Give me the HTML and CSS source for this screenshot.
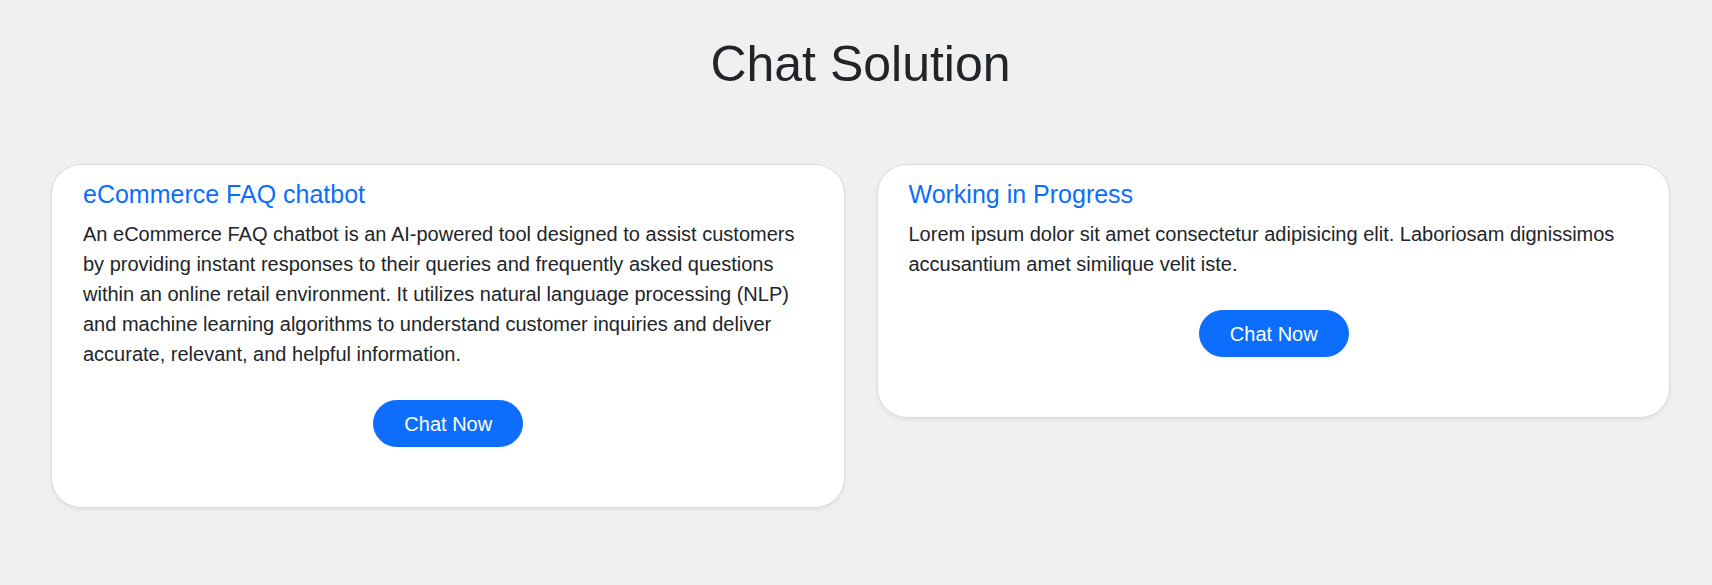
FILE: index.html
```html
<!DOCTYPE html>
<html lang="en">
<head>
<meta charset="utf-8">
<title>Chat Solution</title>
<link rel="stylesheet" href="styles.css">
</head>
<body>
<main class="page">
  <h1 class="page-title">Chat Solution</h1>
  <section class="cards">
    <article class="card">
      <h5 class="card-title">eCommerce FAQ chatbot</h5>
      <p class="card-text">An eCommerce FAQ chatbot is an AI-powered tool designed to assist customers by providing instant responses to their queries and frequently asked questions within an online retail environment. It utilizes natural language processing (NLP) and machine learning algorithms to understand customer inquiries and deliver accurate, relevant, and helpful information.</p>
      <div class="card-action"><a class="btn" href="#">Chat Now</a></div>
    </article>
    <article class="card">
      <h5 class="card-title">Working in Progress</h5>
      <p class="card-text">Lorem ipsum dolor sit amet consectetur adipisicing elit. Laboriosam dignissimos accusantium amet similique velit iste.</p>
      <div class="card-action"><a class="btn" href="#">Chat Now</a></div>
    </article>
  </section>
</main>
</body>
</html>
```
FILE: styles.css
```css
html, body {
  margin: 0;
  padding: 0;
}
body {
  background: #f0f0f0;
  font-family: "Liberation Sans", Arial, sans-serif;
  font-size: 20px;
  line-height: 1.5;
  color: #212529;
}
.page {
  padding: 34px 42px 40px 51px;
}
.page-title {
  margin: 0;
  font-size: 50px;
  font-weight: 400;
  line-height: 60px;
  text-align: center;
  color: #212529;
}
.cards {
  margin-top: 70px;
  display: flex;
  align-items: flex-start;
  gap: 32px;
}
.card {
  flex: 1 1 0;
  min-width: 0;
  background: #fff;
  border: 1px solid #dcdcdc;
  border-radius: 30px;
  box-shadow: 0 2px 4px rgba(0, 0, 0, 0.06);
  padding: 14px 30px 60px 31px;
}
.card-title {
  margin: 0 0 10px;
  font-size: 25px;
  font-weight: 400;
  line-height: 30px;
  color: #0d6efd;
}
.card-text {
  margin: 0;
  font-size: 20px;
  line-height: 30px;
}
.card-action {
  margin-top: 31px;
  display: flex;
  justify-content: center;
}
.btn {
  display: inline-block;
  background: #0d6efd;
  border: 1px solid #0d6efd;
  color: #fff;
  text-decoration: none;
  font-size: 20px;
  line-height: 30px;
  padding: 7.5px 30px;
  border-radius: 24px;
}
```
